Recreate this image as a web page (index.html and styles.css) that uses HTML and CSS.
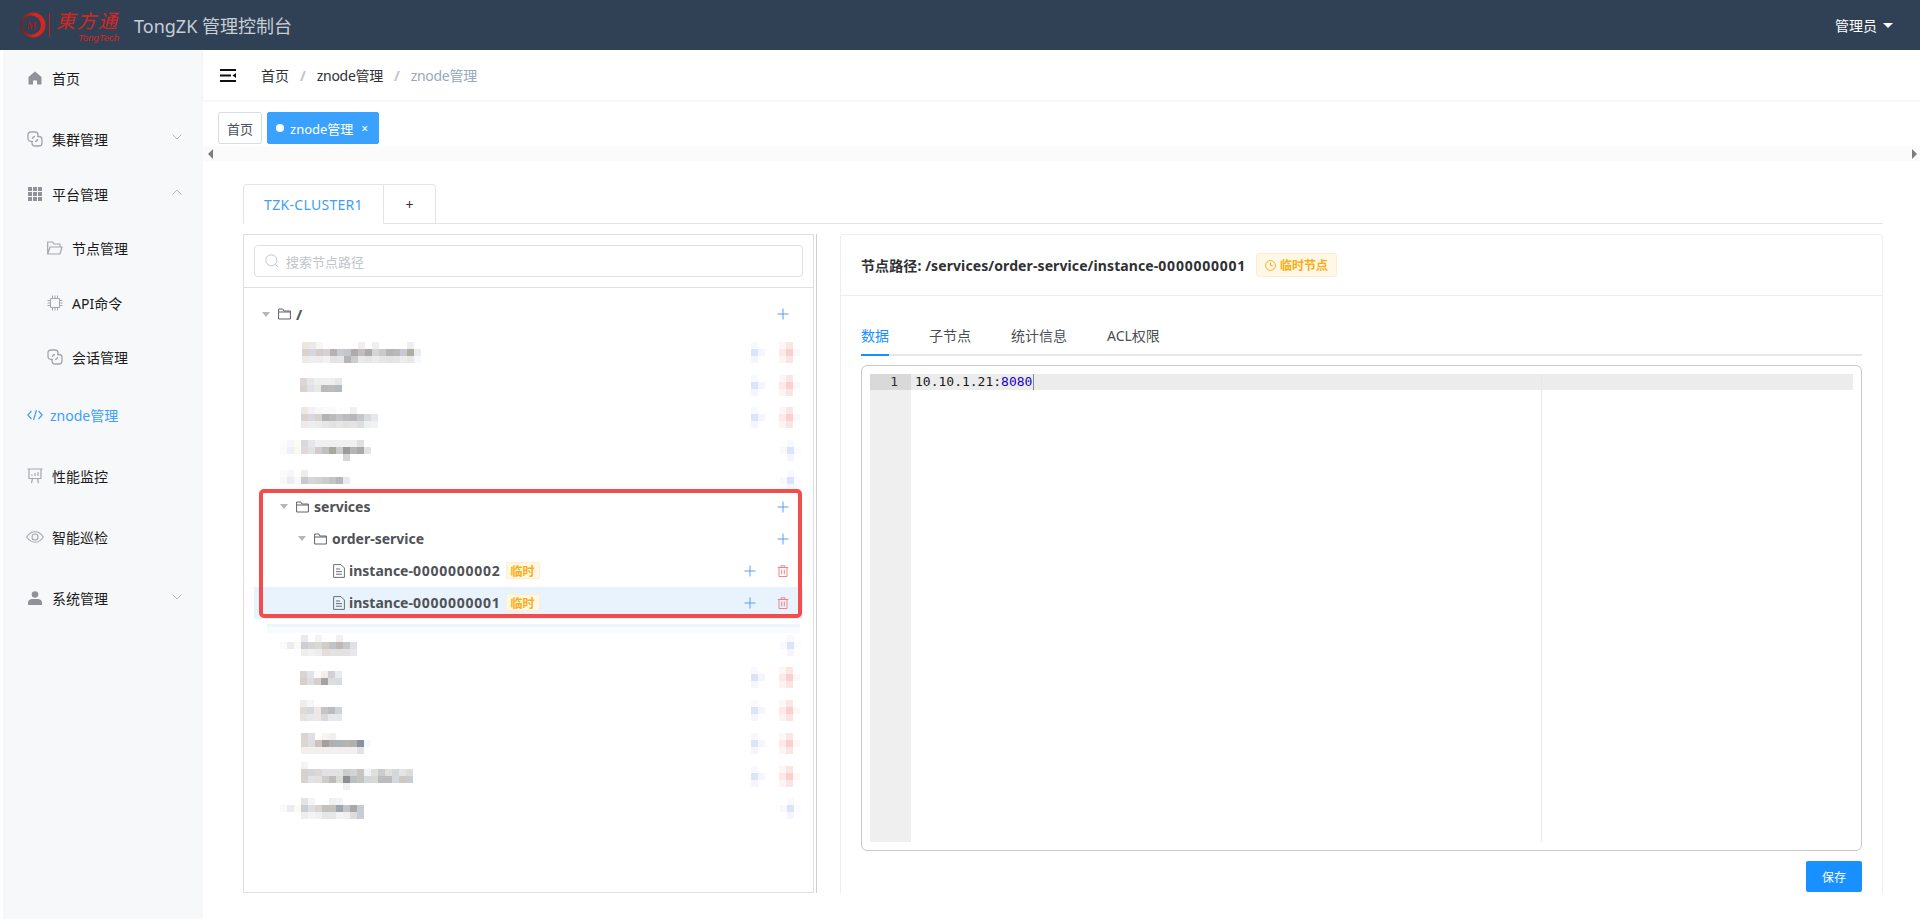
FILE: index.html
```html
<!DOCTYPE html>
<html lang="zh">
<head>
<meta charset="utf-8">
<title>TongZK 管理控制台</title>
<link rel="stylesheet" href="styles.css">
</head>
<body>
<svg class="defs" width="0" height="0">
  <symbol id="leaf-act" viewBox="0 0 7 3">
    <rect x="0" y="0" fill="#f8f9fe"/><rect x="0" y="1" fill="#dbe4fb"/><rect x="1" y="1" fill="#f3f6fe"/><rect x="0" y="2" fill="#f4f6fe"/>
    <rect x="4" y="0" fill="#fdf6f6"/><rect x="5" y="0" fill="#fbe6e6"/><rect x="4" y="1" fill="#fce9e9"/><rect x="5" y="1" fill="#f9cfcf"/><rect x="6" y="1" fill="#fdf7f7"/><rect x="4" y="2" fill="#fdf3f3"/><rect x="5" y="2" fill="#fbe4e4"/>
  </symbol>
  <symbol id="dir-act" viewBox="0 0 3 3">
    <rect x="1" y="0" fill="#f8f9fe"/><rect x="0" y="1" fill="#f8f9fe"/><rect x="1" y="1" fill="#dbe4fb"/><rect x="2" y="1" fill="#fbfcff"/><rect x="1" y="2" fill="#f4f6fe"/>
  </symbol>
  <symbol id="plus" viewBox="0 0 12 12"><path d="M6 .5v11M.5 6h11" fill="none" stroke="#5b9df5" stroke-width="1"/></symbol>
  <symbol id="trash" viewBox="0 0 12 12"><path d="M.8 2.5h10.4M4 2.5V.8h4v1.7M2 2.5v9h8v-9M4.7 4.6v4.8M7.3 4.6v4.8" fill="none" stroke="#f4828a" stroke-width="1"/></symbol>
  <symbol id="tree-dir" viewBox="0 0 13 12"><path d="M.6 11V1h4.200l1.100 2h6.500v8zM.6 4h11.800" fill="none" stroke="#5f6368" stroke-width="1"/></symbol>
  <symbol id="tree-file" viewBox="0 0 12 14"><path d="M.6.6h7.400l3.400 3.400v9.400H.6zM3 5h4M3 7.600h6M3 10.200h6" fill="none" stroke="#6b6f75" stroke-width="1"/></symbol>
  <symbol id="chain" viewBox="0 0 16 16"><path d="M6 10.500H4A3 3 0 0 1 1 7.500V4a3 3 0 0 1 3-3h4a3 3 0 0 1 3 3v1.500M10 5.500h2a3 3 0 0 1 3 3V12a3 3 0 0 1-3 3H8a3 3 0 0 1-3-3v-1.500M5.500 8A2.500 2.500 0 0 1 8 5.500M10.500 8A2.500 2.500 0 0 1 8 10.500" fill="none" stroke="#a3a7ad" stroke-width="1.300"/></symbol>
  <linearGradient id="logo-red" x1="0" x2="1" y1="0" y2="0"><stop offset="0" stop-color="#7d1a1c"/><stop offset=".55" stop-color="#d8261f"/></linearGradient>
</svg>

<header class="topbar">
  <div class="logo">
    <svg class="logo-mark" width="26" height="26" viewBox="0 0 26 26"><path fill-rule="evenodd" d="M13 .5a12.500 12.500 0 1 0 0 25a12.500 12.500 0 1 0 0-25ZM11.500 3.500a9.500 9.500 0 1 1 0 19a9.500 9.500 0 1 1 0-19Z" fill="url(#logo-red)"/><text x="11.500" y="17" text-anchor="middle" class="logo-m">M</text></svg>
    <span class="logo-bar"></span>
    <div class="logo-words">
      <span class="logo-cn">東方通</span>
      <span class="logo-en">TongTech</span>
    </div>
  </div>
  <div class="app-title">TongZK 管理控制台</div>
  <div class="user">管理员<span class="user-caret"></span></div>
</header>

<div class="shell">
  <nav class="sidebar">
    <a class="menu first">
      <svg class="mi" width="14" height="14" viewBox="0 0 14 14"><path d="M7 .5 .5 6v7.500h4.500V9.500h4v4h4.500V6z" fill="#8f9399"/></svg>
      <span>首页</span>
    </a>
    <a class="menu spaced">
      <svg class="mi wide" width="16" height="16"><use href="#chain"/></svg>
      <span>集群管理</span>
      <svg class="chev" width="10" height="6" viewBox="0 0 10 6"><path d="M.5.500 5 5 9.500.500" fill="none" stroke="#b5b8bf"/></svg>
    </a>
    <a class="menu">
      <svg class="mi" width="14" height="14" viewBox="0 0 14 14"><path d="M0 0h4v4H0zM5 0h4v4H5zM10 0h4v4h-4zM0 5h4v4H0zM5 5h4v4H5zM10 5h4v4h-4zM0 10h4v4H0zM5 10h4v4H5zM10 10h4v4h-4z" fill="#8f9399"/></svg>
      <span>平台管理</span>
      <svg class="chev" width="10" height="6" viewBox="0 0 10 6"><path d="M.5 5.500 5 1l4.500 4.500" fill="none" stroke="#b5b8bf"/></svg>
    </a>
    <a class="menu sub">
      <svg class="mi sub-i" width="16" height="14" viewBox="0 0 16 14"><path d="M.7 13V1h5l1.300 2h6v3M.7 13h12.300l2-7H3z" fill="none" stroke="#a3a7ad" stroke-width="1.200"/></svg>
      <span>节点管理</span>
    </a>
    <a class="menu sub">
      <svg class="mi sub-i" width="16" height="16" viewBox="0 0 16 16"><path d="M3.500 3.500h9v9h-9zM5.500 3V.5M8 3V.5M10.500 3V.5M5.500 15.500V13M8 15.500V13M10.500 15.500V13M.5 5.500H3M.5 8H3M.5 10.500H3M13 5.500h2.500M13 8h2.500M13 10.500h2.500" fill="none" stroke="#a3a7ad" stroke-width="1"/></svg>
      <span>API命令</span>
    </a>
    <a class="menu sub">
      <svg class="mi sub-i" width="16" height="16"><use href="#chain"/></svg>
      <span>会话管理</span>
    </a>
    <a class="menu active mid">
      <svg class="mi-code" width="16" height="12" viewBox="0 0 16 12"><path d="M4.500 2 .8 6l3.700 4M11.500 2l3.700 4-3.700 4M9.500 1 6.500 11" fill="none" stroke="#409eff" stroke-width="1.200"/></svg>
      <span>znode管理</span>
    </a>
    <a class="menu spaced">
      <svg class="mi wide" width="16" height="16" viewBox="0 0 16 16"><path d="M.5 1h15M2 1v9.500h12V1M5.500 10.500 4.500 15M10.500 10.500l1 4.500M5 8V6.500M8 8V5M11 8V4" fill="none" stroke="#a3a7ad" stroke-width="1.200"/></svg>
      <span>性能监控</span>
    </a>
    <a class="menu spaced">
      <svg class="mi-eye" width="18" height="12" viewBox="0 0 18 12"><path d="M.7 6C3 2.500 5.800.8 9 .8s6 1.700 8.300 5.200C15 9.500 12.200 11.200 9 11.200S3 9.500.7 6z" fill="none" stroke="#a3a7ad" stroke-width="1.100"/><circle cx="9" cy="6" r="3" fill="none" stroke="#a3a7ad" stroke-width="1.100"/></svg>
      <span>智能巡检</span>
    </a>
    <a class="menu spaced">
      <svg class="mi" width="14" height="14" viewBox="0 0 14 14"><circle cx="7" cy="3.500" r="3.300" fill="#8f9399"/><path d="M0 14v-2.500C0 9.500 2 8 4 8h6c2 0 4 1.500 4 3.500V14z" fill="#8f9399"/></svg>
      <span>系统管理</span>
      <svg class="chev" width="10" height="6" viewBox="0 0 10 6"><path d="M.5.500 5 5 9.500.500" fill="none" stroke="#b5b8bf"/></svg>
    </a>
  </nav>

  <main class="main">
    <div class="crumbs">
      <svg class="burger" width="16" height="13" viewBox="0 0 16 13"><path d="M0 1h16M0 6.500h11M0 12h16" stroke="#111" stroke-width="2"/><path d="M16 4v5l-3.500-2.500z" fill="#111"/></svg>
      <span class="crumb">首页</span><span class="crumb-sep">/</span>
      <span class="crumb tight">znode管理</span><span class="crumb-sep">/</span>
      <span class="crumb tight last">znode管理</span>
    </div>

    <div class="tags">
      <span class="tag">首页</span>
      <span class="tag on"><i class="tag-dot"></i>znode管理<i class="tag-x">×</i></span>
    </div>
    <div class="strip"><i class="arr left"></i><i class="arr right"></i></div>

    <section class="content">
      <div class="cluster-tabs">
        <span class="ctab on">TZK-CLUSTER1</span>
        <span class="ctab add">+</span>
      </div>

      <div class="split">
        <div class="tree-panel">
          <div class="search-wrap">
            <div class="search">
              <svg width="14" height="14" viewBox="0 0 14 14"><circle cx="6.300" cy="6.300" r="5.500" fill="none" stroke="#c0c4cc"/><path d="m10.300 10.300 2.700 2.700" stroke="#c0c4cc"/></svg>
              <span>搜索节点路径</span>
            </div>
          </div>

          <div class="tree">
            <div class="row lv0">
              <i class="tri"></i><svg class="nico" width="13" height="12"><use href="#tree-dir"/></svg><span class="nname root-name">/</span>
              <svg class="act-one" width="12" height="12"><use href="#plus"/></svg>
            </div>

            <div class="blur-group first-blur">
              <div class="brow leaf">
                <svg class="m" width="124" height="21" viewBox="0 0 17 3">
                  <rect x="0" y="0" fill="#ece6e3"/><rect x="1" y="0" fill="#ece8e8"/><rect x="2" y="0" fill="#f6f6f6"/><rect x="8" y="0" fill="#f0eeee"/><rect x="10" y="0" fill="#f0f0f0"/><rect x="15" y="0" fill="#eeeeee"/>
                  <rect x="0" y="1" fill="#d9d2cf"/><rect x="1" y="1" fill="#d6d6de"/><rect x="2" y="1" fill="#d4ccca"/><rect x="3" y="1" fill="#d6d2d2"/><rect x="4" y="1" fill="#b5b3b1"/><rect x="5" y="1" fill="#c8ccd0"/><rect x="6" y="1" fill="#c4c6cc"/><rect x="7" y="1" fill="#ababab"/><rect x="8" y="1" fill="#c0bcc0"/><rect x="9" y="1" fill="#aeaaaa"/><rect x="10" y="1" fill="#d2d6d8"/><rect x="11" y="1" fill="#c9cbc9"/><rect x="12" y="1" fill="#b8b4b6"/><rect x="13" y="1" fill="#bbb8bb"/><rect x="14" y="1" fill="#c8c8d0"/><rect x="15" y="1" fill="#b2ae9f"/><rect x="16" y="1" fill="#e8edf2"/>
                  <rect x="0" y="2" fill="#eeeae8"/><rect x="1" y="2" fill="#eeeef2"/><rect x="2" y="2" fill="#efecec"/><rect x="3" y="2" fill="#f2f2f2"/><rect x="4" y="2" fill="#e4e4e4"/><rect x="5" y="2" fill="#e6e6e6"/><rect x="6" y="2" fill="#b5b5b5"/><rect x="7" y="2" fill="#cccccc"/><rect x="8" y="2" fill="#eaeaea"/><rect x="9" y="2" fill="#e6e6e6"/><rect x="10" y="2" fill="#ececec"/><rect x="11" y="2" fill="#e6e6e6"/><rect x="12" y="2" fill="#e4e4e4"/><rect x="13" y="2" fill="#e6e6e6"/><rect x="14" y="2" fill="#ececec"/><rect x="15" y="2" fill="#e8e8e8"/><rect x="16" y="2" fill="#f6f8fa"/>
                </svg>
                <svg class="m-act" width="51" height="21"><use href="#leaf-act"/></svg>
              </div>
              <div class="brow leaf">
                <svg class="m" width="44" height="14" viewBox="0 0 6 2">
                  <rect x="0" y="0" fill="#ddd6d3"/><rect x="1" y="0" fill="#e6e6ea"/><rect x="2" y="0" fill="#efefef"/><rect x="3" y="0" fill="#efefef"/><rect x="4" y="0" fill="#efefef"/><rect x="5" y="0" fill="#e8e8e8"/>
                  <rect x="0" y="1" fill="#d8d2cf"/><rect x="1" y="1" fill="#e0e0e6"/><rect x="2" y="1" fill="#e8e8e8"/><rect x="3" y="1" fill="#b9b9b9"/><rect x="4" y="1" fill="#bcbcbc"/><rect x="5" y="1" fill="#b4bac2"/>
                </svg>
                <svg class="m-act" width="51" height="21"><use href="#leaf-act"/></svg>
              </div>
              <div class="brow leaf">
                <svg class="m" width="80" height="21" viewBox="0 0 11 3">
                  <rect x="0" y="0" fill="#eee8e5"/><rect x="1" y="0" fill="#f2f2f2"/><rect x="2" y="0" fill="#f8f8fa"/><rect x="3" y="0" fill="#fafafa"/><rect x="4" y="0" fill="#fafafa"/><rect x="7" y="0" fill="#f0f0f0"/>
                  <rect x="0" y="1" fill="#d9d2cf"/><rect x="1" y="1" fill="#d8d8de"/><rect x="2" y="1" fill="#d6d2d0"/><rect x="3" y="1" fill="#b4b4b4"/><rect x="4" y="1" fill="#bbbbbb"/><rect x="5" y="1" fill="#c2c4c8"/><rect x="6" y="1" fill="#bcbcbc"/><rect x="7" y="1" fill="#b8b8bc"/><rect x="8" y="1" fill="#c4c8c8"/><rect x="9" y="1" fill="#d6dbde"/><rect x="10" y="1" fill="#e4e8ea"/>
                  <rect x="0" y="2" fill="#eeeae8"/><rect x="1" y="2" fill="#eeeef0"/><rect x="2" y="2" fill="#ececec"/><rect x="3" y="2" fill="#e6e6e6"/><rect x="4" y="2" fill="#e2e2e2"/><rect x="5" y="2" fill="#e6e6e6"/><rect x="6" y="2" fill="#e2e2e2"/><rect x="7" y="2" fill="#e4e4e4"/><rect x="8" y="2" fill="#dedede"/><rect x="9" y="2" fill="#eef0f0"/><rect x="10" y="2" fill="#f0f2f4"/>
                </svg>
                <svg class="m-act" width="51" height="21"><use href="#leaf-act"/></svg>
              </div>
              <div class="brow dir">
                <svg class="m" width="94" height="21" viewBox="0 0 13 3">
                  <rect x="0" y="0" fill="#fbfbfb"/><rect x="1" y="0" fill="#f6f7fa"/><rect x="2" y="0" fill="#fdfbf8"/><rect x="3" y="0" fill="#d9d9dc"/><rect x="4" y="0" fill="#e6e6ea"/><rect x="5" y="0" fill="#f1f0f0"/><rect x="6" y="0" fill="#f1f0f0"/><rect x="7" y="0" fill="#f1f0f0"/><rect x="8" y="0" fill="#f1f0f0"/><rect x="9" y="0" fill="#f1f0f0"/><rect x="10" y="0" fill="#f1f0f0"/><rect x="11" y="0" fill="#e2e0df"/>
                  <rect x="0" y="1" fill="#fafafa"/><rect x="1" y="1" fill="#eef1f5"/><rect x="2" y="1" fill="#fbf8f2"/><rect x="3" y="1" fill="#dfd9d9"/><rect x="4" y="1" fill="#e0e2ea"/><rect x="5" y="1" fill="#d2cbc9"/><rect x="6" y="1" fill="#c0c0c0"/><rect x="7" y="1" fill="#a8a8a0"/><rect x="8" y="1" fill="#c8ccd0"/><rect x="9" y="1" fill="#9a9a9a"/><rect x="10" y="1" fill="#b5b5b5"/><rect x="11" y="1" fill="#a9a9a9"/><rect x="12" y="1" fill="#e0e4e8"/>
                  <rect x="9" y="2" fill="#d5d5d5"/>
                </svg>
                <svg class="m-act" width="22" height="21"><use href="#dir-act"/></svg>
              </div>
              <div class="brow dir">
                <svg class="m up" width="73" height="14" viewBox="0 0 10 2">
                  <rect x="0" y="0" fill="#fbfbfb"/><rect x="1" y="0" fill="#f5f7f9"/><rect x="3" y="0" fill="#ededed"/>
                  <rect x="0" y="1" fill="#f8f8f8"/><rect x="1" y="1" fill="#eaeef2"/><rect x="2" y="1" fill="#faf8f4"/><rect x="3" y="1" fill="#c9c9cd"/><rect x="4" y="1" fill="#d4d6da"/><rect x="5" y="1" fill="#d6d0ce"/><rect x="6" y="1" fill="#cccccc"/><rect x="7" y="1" fill="#c4c4c4"/><rect x="8" y="1" fill="#b8b8bc"/><rect x="9" y="1" fill="#eaeaea"/>
                </svg>
                <svg class="m-act up" width="22" height="21"><use href="#dir-act"/></svg>
              </div>
            </div>

            <div class="real-group">
              <div class="row lv1">
                <i class="tri"></i><svg class="nico" width="13" height="12"><use href="#tree-dir"/></svg><span class="nname">services</span>
                <svg class="act-one" width="12" height="12"><use href="#plus"/></svg>
              </div>
              <div class="row lv2">
                <i class="tri"></i><svg class="nico" width="13" height="12"><use href="#tree-dir"/></svg><span class="nname">order-service</span>
                <svg class="act-one" width="12" height="12"><use href="#plus"/></svg>
              </div>
              <div class="row lv3">
                <i class="tri hide"></i><svg class="nico" width="12" height="14"><use href="#tree-file"/></svg><span class="nname">instance-<span class="digits">0000000002</span></span><span class="mini-tag">临时</span>
                <svg class="act-two" width="12" height="12"><use href="#plus"/></svg>
                <svg class="act-one" width="12" height="12"><use href="#trash"/></svg>
              </div>
              <div class="row lv3 sel">
                <i class="tri hide"></i><svg class="nico" width="12" height="14"><use href="#tree-file"/></svg><span class="nname">instance-<span class="digits">0000000001</span></span><span class="mini-tag">临时</span>
                <svg class="act-two" width="12" height="12"><use href="#plus"/></svg>
                <svg class="act-one" width="12" height="12"><use href="#trash"/></svg>
              </div>
            </div>
            <div class="band"></div>

            <div class="blur-group">
              <div class="brow dir">
                <svg class="m" width="80" height="21" viewBox="0 0 11 3">
                  <rect x="3" y="0" fill="#eaeaea"/><rect x="5" y="0" fill="#f4f4f4"/><rect x="8" y="0" fill="#f0f0f0"/>
                  <rect x="0" y="1" fill="#fafafa"/><rect x="1" y="1" fill="#e8edf2"/><rect x="2" y="1" fill="#fdf9f0"/><rect x="3" y="1" fill="#ccced3"/><rect x="4" y="1" fill="#d4d6d6"/><rect x="5" y="1" fill="#d8d8d4"/><rect x="6" y="1" fill="#d0ccc8"/><rect x="7" y="1" fill="#c0c4c8"/><rect x="8" y="1" fill="#bfb8b8"/><rect x="9" y="1" fill="#c8c8c8"/><rect x="10" y="1" fill="#dde0e4"/>
                  <rect x="3" y="2" fill="#eeeeee"/><rect x="4" y="2" fill="#f2f2f2"/><rect x="5" y="2" fill="#eeeeee"/><rect x="6" y="2" fill="#e2dedc"/><rect x="7" y="2" fill="#e2e2e2"/><rect x="8" y="2" fill="#e2e2e2"/><rect x="9" y="2" fill="#e2e2e2"/><rect x="10" y="2" fill="#e8e8ec"/>
                </svg>
                <svg class="m-act" width="22" height="21"><use href="#dir-act"/></svg>
              </div>
              <div class="brow leaf">
                <svg class="m" width="44" height="14" viewBox="0 0 6 2">
                  <rect x="0" y="0" fill="#dcd4d0"/><rect x="1" y="0" fill="#e2e2e8"/><rect x="2" y="0" fill="#fafafa"/><rect x="3" y="0" fill="#f2eeea"/><rect x="4" y="0" fill="#d4d0d2"/><rect x="5" y="0" fill="#e8ecf0"/>
                  <rect x="0" y="1" fill="#d6d0cc"/><rect x="1" y="1" fill="#dcdce2"/><rect x="2" y="1" fill="#d6d0cc"/><rect x="3" y="1" fill="#a4a2a2"/><rect x="4" y="1" fill="#dddde0"/><rect x="5" y="1" fill="#d8dce0"/>
                </svg>
                <svg class="m-act" width="51" height="21"><use href="#leaf-act"/></svg>
              </div>
              <div class="brow leaf">
                <svg class="m" width="44" height="21" viewBox="0 0 6 3">
                  <rect x="0" y="0" fill="#eeeeee"/><rect x="1" y="0" fill="#f6f6f6"/>
                  <rect x="0" y="1" fill="#e0dad6"/><rect x="1" y="1" fill="#d6d8e0"/><rect x="2" y="1" fill="#eee8e4"/><rect x="3" y="1" fill="#c8c4c4"/><rect x="4" y="1" fill="#b8bcc0"/><rect x="5" y="1" fill="#d0d4d8"/>
                  <rect x="0" y="2" fill="#e6e2e0"/><rect x="1" y="2" fill="#e6e8ec"/><rect x="2" y="2" fill="#ece8e6"/><rect x="3" y="2" fill="#dcdad8"/><rect x="4" y="2" fill="#e6e8ec"/><rect x="5" y="2" fill="#e6e8ea"/>
                </svg>
                <svg class="m-act" width="51" height="21"><use href="#leaf-act"/></svg>
              </div>
              <div class="brow leaf">
                <svg class="m" width="73" height="21" viewBox="0 0 10 3">
                  <rect x="0" y="0" fill="#dcd4d0"/><rect x="1" y="0" fill="#e0e0e4"/><rect x="3" y="0" fill="#f8f4f0"/><rect x="4" y="0" fill="#f0f0f0"/>
                  <rect x="0" y="1" fill="#dcd6d2"/><rect x="1" y="1" fill="#dcdee4"/><rect x="2" y="1" fill="#ccc4be"/><rect x="3" y="1" fill="#a4a0a0"/><rect x="4" y="1" fill="#b0b0b0"/><rect x="5" y="1" fill="#a8b4b8"/><rect x="6" y="1" fill="#b4b4b0"/><rect x="7" y="1" fill="#b0b0ac"/><rect x="8" y="1" fill="#8e9298"/><rect x="9" y="1" fill="#f4f9fd"/>
                  <rect x="0" y="2" fill="#f2f0ee"/><rect x="1" y="2" fill="#f2f0ee"/><rect x="2" y="2" fill="#f2f0ee"/><rect x="3" y="2" fill="#f2f0ee"/><rect x="4" y="2" fill="#f2f0ee"/><rect x="5" y="2" fill="#f2f0ee"/><rect x="6" y="2" fill="#f2f0ee"/><rect x="7" y="2" fill="#f2f0ee"/><rect x="8" y="2" fill="#dfe3e8"/>
                </svg>
                <svg class="m-act" width="51" height="21"><use href="#leaf-act"/></svg>
              </div>
              <div class="brow leaf">
                <svg class="m" width="116" height="28" viewBox="0 0 16 4">
                  <rect x="0" y="0" fill="#f4f4f4"/>
                  <rect x="0" y="1" fill="#d8d0cc"/><rect x="1" y="1" fill="#d4d4dc"/><rect x="2" y="1" fill="#ddd8d4"/><rect x="3" y="1" fill="#e2e2e4"/><rect x="4" y="1" fill="#e2e2e4"/><rect x="5" y="1" fill="#e0e2e2"/><rect x="6" y="1" fill="#cccccc"/><rect x="7" y="1" fill="#d4d4d4"/><rect x="8" y="1" fill="#c8c4c4"/><rect x="9" y="1" fill="#f0f2f4"/><rect x="10" y="1" fill="#e0e0da"/><rect x="11" y="1" fill="#c8ccd2"/><rect x="12" y="1" fill="#e0e0dc"/><rect x="13" y="1" fill="#d4d8d8"/><rect x="14" y="1" fill="#e4e4e4"/><rect x="15" y="1" fill="#dcdcdc"/>
                  <rect x="0" y="2" fill="#d8d2ce"/><rect x="1" y="2" fill="#e2e2e8"/><rect x="2" y="2" fill="#e4e0de"/><rect x="3" y="2" fill="#cccccc"/><rect x="4" y="2" fill="#bfbdba"/><rect x="5" y="2" fill="#d8dcd8"/><rect x="6" y="2" fill="#8e8e90"/><rect x="7" y="2" fill="#b8c0c4"/><rect x="8" y="2" fill="#c4c4c2"/><rect x="9" y="2" fill="#d4d8d8"/><rect x="10" y="2" fill="#d8d8d4"/><rect x="11" y="2" fill="#bcbcbc"/><rect x="12" y="2" fill="#bcbcbc"/><rect x="13" y="2" fill="#d4d8dc"/><rect x="14" y="2" fill="#ccc8c4"/><rect x="15" y="2" fill="#c8ccd0"/>
                  <rect x="6" y="3" fill="#f0f0f2"/>
                </svg>
                <svg class="m-act" width="51" height="21"><use href="#leaf-act"/></svg>
              </div>
              <div class="brow dir">
                <svg class="m" width="87" height="21" viewBox="0 0 12 3">
                  <rect x="3" y="0" fill="#e4e4e4"/><rect x="4" y="0" fill="#f4f4f4"/><rect x="7" y="0" fill="#f0f0f0"/><rect x="8" y="0" fill="#f4f4f4"/>
                  <rect x="0" y="1" fill="#fafafa"/><rect x="1" y="1" fill="#e8edf2"/><rect x="2" y="1" fill="#fdf9f0"/><rect x="3" y="1" fill="#ccced6"/><rect x="4" y="1" fill="#dcdee2"/><rect x="5" y="1" fill="#d8d4d0"/><rect x="6" y="1" fill="#c4c0be"/><rect x="7" y="1" fill="#c4c0be"/><rect x="8" y="1" fill="#a0a4ae"/><rect x="9" y="1" fill="#c4c4c8"/><rect x="10" y="1" fill="#a8a8ac"/><rect x="11" y="1" fill="#c8ccd2"/>
                  <rect x="3" y="2" fill="#eeeeee"/><rect x="4" y="2" fill="#f4f4f4"/><rect x="5" y="2" fill="#f0f0f0"/><rect x="6" y="2" fill="#e6e6e6"/><rect x="7" y="2" fill="#e6e6e6"/><rect x="8" y="2" fill="#f2f2f2"/><rect x="9" y="2" fill="#f0f0f0"/><rect x="10" y="2" fill="#e0dcda"/><rect x="11" y="2" fill="#c8ccd4"/>
                </svg>
                <svg class="m-act" width="22" height="21"><use href="#dir-act"/></svg>
              </div>
            </div>
          </div>
          <div class="red-box"></div>
        </div>

        <div class="splitter"></div>

        <div class="detail">
          <div class="detail-head">
            <span class="path">节点路径: /services/order-service/instance-<span class="digits">0000000001</span></span>
            <span class="eph">
              <svg width="11" height="11" viewBox="0 0 11 11"><circle cx="5.500" cy="5.500" r="4.900" fill="none" stroke="#faad14"/><path d="M5.500 2.700v3h2.300" fill="none" stroke="#faad14"/></svg>
              临时节点
            </span>
          </div>
          <div class="detail-body">
            <div class="dtabs">
              <span class="dtab on">数据</span>
              <span class="dtab">子节点</span>
              <span class="dtab">统计信息</span>
              <span class="dtab">ACL权限</span>
            </div>
            <div class="editor">
              <div class="ed-inner">
                <div class="gutter"><div class="gutter-cell">1</div></div>
                <div class="code"><div class="code-line">10.10.1.21:<span class="num">8080</span><i class="cursor"></i></div></div>
                <i class="print-margin"></i>
              </div>
            </div>
            <div class="save-row"><button class="save">保存</button></div>
          </div>
        </div>
      </div>
    </section>
  </main>
</div>
</body>
</html>
```

FILE: styles.css
```css
* { box-sizing: border-box; }
html, body { margin: 0; height: 100%; }
body {
  height: 919px;
  overflow: hidden;
  display: flex;
  flex-direction: column;
  background: #fff;
  color: #303133;
  font: 14px "Noto Sans", "Noto Sans CJK SC", sans-serif;
}
i { font-style: normal; }
.defs { position: absolute; }

/* top bar */
.topbar {
  height: 50px;
  flex: none;
  display: flex;
  align-items: center;
  background: #304156;
  padding: 0 27px 0 20px;
}
.logo { display: flex; align-items: center; width: 114px; }
.logo-m { font: 700 10px "Liberation Serif", serif; fill: #a01c1c; }
.logo-bar { width: 1px; height: 24px; background: #c9201d; margin: 0 6px 0 3px; }
.logo-words { display: flex; flex-direction: column; align-items: flex-end; width: 63px; margin-top: -2px; }
.logo-cn { font: italic 400 19px/28px "Noto Sans CJK TC", sans-serif; color: #d8261f; letter-spacing: 2px; white-space: nowrap; }
.logo-en { font: italic 9.500px/8px "Liberation Sans", sans-serif; color: #d8261f; white-space: nowrap; }
.app-title { font-size: 18px; color: #c7ced6; }
.user { margin-left: auto; display: flex; align-items: center; color: #fff; font-size: 14px; }
.user-caret {
  margin-left: 6px;
  border: 5px solid transparent;
  border-top: 5px solid #fff;
  border-bottom: 0;
}

/* shell */
.shell { flex: 1; display: flex; min-height: 0; }

/* sidebar */
.sidebar {
  width: 200px;
  margin-left: 3px;
  flex: none;
  background: #f7f8fa;
  color: #1a1a1a;
}
.menu { display: flex; align-items: center; height: 55px; padding-left: 22px; position: relative; }
.menu.spaced { margin-top: 6px; }
.menu.mid { margin-top: 3.200px; }
.menu.first { margin-top: 0; }
.menu.sub { height: 54.600px; }
.menu .mi { margin: 0 10px 0 3px; flex: none; }
.menu .mi.wide { margin: 0 9px 0 2px; }
.menu .mi.sub-i { margin: 0 9px 0 22px; }
.mi-code { margin: 0 7px 0 2px; flex: none; }
.mi-eye { margin: 0 8px 0 1px; flex: none; }
.menu.active { color: #409eff; }
.chev { position: absolute; left: 169px; top: 23px; }

/* main */
.main { flex: 1; min-width: 0; display: flex; flex-direction: column; }
.crumbs {
  height: 50px;
  flex: none;
  display: flex;
  align-items: center;
  padding-left: 17px;
  box-shadow: 0 1px 3px rgba(0, 21, 41, .06);
  color: #303133;
}
.burger { margin-right: 25px; }
.crumb-sep { color: #c0c4cc; font-weight: 700; margin: 0 11px; }
.crumb.tight { letter-spacing: -.3px; }
.crumb.last { color: #97a8be; }

.tags { height: 46px; flex: none; display: flex; gap: 5px; padding: 12px 0 2px 15px; }
.tag {
  height: 32px;
  display: flex;
  align-items: center;
  padding: 0 8px;
  border: 1px solid #d8dce5;
  border-radius: 2px;
  font-size: 13px;
  color: #495060;
  background: #fff;
}
.tag.on { width: 112px; background: #3ba1ff; border-color: #3ba1ff; color: #fff; }
.tag-dot { width: 8px; height: 8px; border-radius: 50%; background: #fff; margin-right: 6px; }
.tag-x { margin-left: 8px; font-size: 12px; }

.strip {
  height: 15px;
  flex: none;
  display: flex;
  justify-content: space-between;
  align-items: center;
  padding: 0 3px 0 5px;
  background: #fbfbfb;
}
.arr { width: 0; height: 0; border: 5px solid transparent; }
.arr.left { border-left: 0; border-right-color: #7d7d7d; }
.arr.right { border-right: 0; border-left-color: #7d7d7d; }

.content { flex: 1; min-height: 0; padding: 23px 37px 0 40px; }
.cluster-tabs { display: flex; height: 40px; border-bottom: 1px solid #e0e3ea; }
.ctab {
  height: 40px;
  display: flex;
  align-items: center;
  justify-content: center;
  border: 1px solid #dfe4ed;
  border-left-width: 0;
  color: #303133;
}
.ctab.on {
  width: 141px;
  border-left-width: 1px;
  border-bottom-color: #fff;
  border-radius: 4px 0 0 0;
  color: #409eff;
  letter-spacing: .3px;
}
.ctab.add { width: 52px; border-radius: 0 4px 0 0; border-bottom-color: #e0e3ea; }

.split { display: flex; height: 659px; margin-top: 10px; }

/* tree */
.tree-panel {
  position: relative;
  width: 571px;
  flex: none;
  border: 1px solid #dcdfe6;
  display: flex;
  flex-direction: column;
}
.search-wrap { height: 53px; flex: none; padding: 10px 10px 0; border-bottom: 1px solid #dcdfe6; }
.search {
  height: 32px;
  display: flex;
  align-items: center;
  gap: 7px;
  padding: 0 10px;
  border: 1px solid #dcdfe6;
  border-radius: 4px;
  color: #c0c4cc;
  font-size: 13px;
}
.tree { padding: 10px 10px 0; flex: 1; }
.row { height: 32px; display: flex; align-items: center; }
.lv0 { padding-left: 8px; }
.lv1 { padding-left: 26px; }
.lv2 { padding-left: 44px; }
.lv3 { padding-left: 62px; }
.lv3 .nico { margin-left: 1px; margin-right: 4px; }
.sel { background: #e9f3fd; }
.tri {
  width: 0;
  height: 0;
  flex: none;
  border: 4px solid transparent;
  border-top: 5px solid #b3b6bb;
  border-bottom: 0;
  margin-right: 8px;
}
.tri.hide { visibility: hidden; }
.nico { flex: none; margin-right: 5px; }
.nname { font-weight: 700; color: #4f5257; font-size: 14px; }
.digits { letter-spacing: .75px; }
.root-name { font-size: 15px; }
.mini-tag {
  margin-left: 5px;
  height: 17px;
  width: 34px;
  display: flex;
  align-items: center;
  justify-content: center;
  font-size: 12px;
  color: #faad14;
  font-weight: 700;
  background: #fff8e6;
  border: 1px solid #fff0c9;
  border-radius: 2px;
}
.act-one { margin-left: auto; margin-right: 14px; flex: none; }
.act-two { margin-left: auto; margin-right: 21px; flex: none; }
.act-two + .act-one { margin-left: 0; }

.first-blur { margin-top: 6px; }
.brow { height: 32.7px; display: flex; align-items: center; }
.brow.leaf { padding-left: 45px; }
.brow.dir { padding-left: 24px; }
.m, .m-act { shape-rendering: crispEdges; flex: none; }
.m rect, .m-act rect, symbol rect { width: 1px; height: 1px; }
.m-act { margin-left: auto; margin-right: 2px; }
.m.up, .m-act.up { align-self: flex-start; margin-top: 3px; }

.real-group { margin-top: -8.500px; }
.band {
  height: 9px;
  margin: 5px 3px -4px 13px;
  background: linear-gradient(#eef6fd 0 3px, #f7fbff 3px);
}
.red-box {
  position: absolute;
  left: 15px;
  top: 254px;
  width: 543px;
  height: 129px;
  border: 4px solid #f44c4a;
  border-radius: 5px;
  pointer-events: none;
}

.splitter { width: 1px; margin-left: 2px; flex: none; background: #d0d0d2; }

/* detail */
.detail {
  flex: 1;
  min-width: 0;
  margin-left: 23px;
  border: 1px solid #ebeef5;
  border-bottom: 0;
  border-radius: 4px 4px 0 0;
  display: flex;
  flex-direction: column;
  overflow: hidden;
}
.detail-head {
  height: 61px;
  flex: none;
  display: flex;
  align-items: center;
  padding-left: 20px;
  border-bottom: 1px solid #ebeef5;
}
.path { font-weight: 700; color: #303133; letter-spacing: .1px; }
.eph {
  margin-left: 10px;
  height: 24px;
  display: flex;
  align-items: center;
  gap: 4px;
  padding: 0 8px;
  font-size: 12px;
  font-weight: 700;
  color: #faad14;
  background: #fff8e6;
  border: 1px solid #ffeec9;
  border-radius: 3px;
}
.detail-body { flex: 1; padding: 26px 20px 0 20px; display: flex; flex-direction: column; min-height: 0; }
.dtabs { height: 34px; flex: none; display: flex; gap: 40px; border-bottom: 2px solid #e4e7ed; }
.dtab { height: 34px; line-height: 28px; color: #4a4d52; }
.dtab.on { color: #1890ff; border-bottom: 2px solid #1890ff; }
.editor {
  height: 486px;
  flex: none;
  margin-top: 9px;
  padding: 8px;
  border: 1px solid #c8c8c8;
  border-radius: 6px;
}
.ed-inner { position: relative; height: 100%; display: flex; font: 13px/16px "DejaVu Sans Mono", monospace; color: #1a1a1a; }
.gutter { width: 41px; flex: none; background: #efefef; }
.gutter-cell { height: 16px; background: #d9d9d9; text-align: right; padding-right: 13px; color: #333; }
.code { flex: 1; }
.code-line { height: 16px; background: #ececec; padding-left: 4px; display: flex; }
.num { color: #1600c8; }
.cursor { width: 1px; height: 16px; background: #888; margin-left: 1px; }
.print-margin { position: absolute; left: 671px; top: 0; bottom: 0; width: 1px; background: #e8e8e8; }
.save-row { display: flex; justify-content: flex-end; margin-top: 10px; flex: none; }
.save {
  width: 56px;
  height: 31px;
  border: 0;
  border-radius: 2px;
  background: #1890ff;
  color: #fff;
  font: 12px "Noto Sans", "Noto Sans CJK SC", sans-serif;
}
```
